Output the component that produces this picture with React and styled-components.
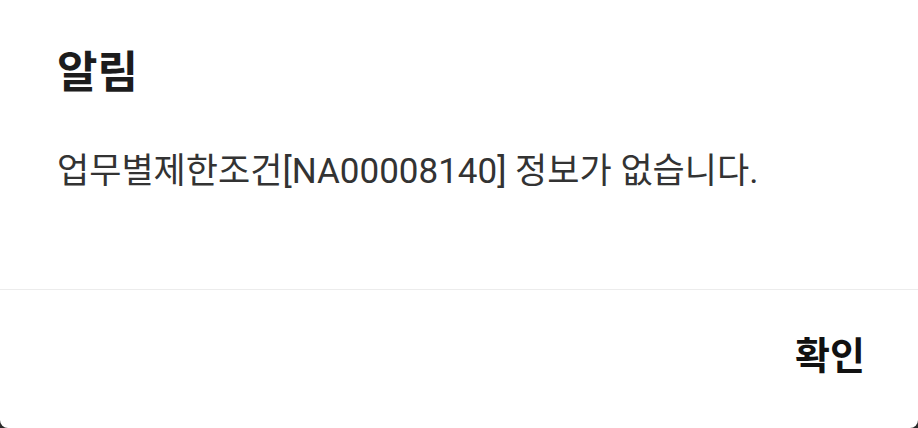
import styled, { createGlobalStyle } from "styled-components";

const GlobalStyle = createGlobalStyle`
    html, body {
        margin: 0;
        padding: 0;
        background: #2b2b2b;
        font-family: Roboto, "Noto Sans CJK KR", sans-serif;
    }
`

export default function App() {
    return (
        <>
            <GlobalStyle />
            <Dialog>
                <Content>
                    <Title>알림</Title>
                    <Message>업무별제한조건[NA00008140] 정보가 없습니다.</Message>
                </Content>
                <Divider />
                <Footer>
                    <ConfirmButton>확인</ConfirmButton>
                </Footer>
            </Dialog>
        </>
    )
}

const Dialog = styled.div`
    width: 918px;
    height: 428px;
    background-color: #fff;
    border-radius: 0 0 8px 8px;
    display: flex;
    flex-direction: column;
    overflow: hidden;
`

const Content = styled.div`
    height: 289px;
    box-sizing: border-box;
    padding: 51px 57px 0;
`

const Title = styled.h2`
    margin: 0;
    font-size: 44px;
    line-height: 1;
    font-weight: 700;
    color: #1c1c1c;
`

const Message = styled.p`
    margin: 59px 0 0;
    font-size: 35px;
    line-height: 1;
    font-weight: 400;
    color: #333;
`

const Divider = styled.div`
    border-bottom: 1px solid #ececec;
`

const Footer = styled.div`
    flex: 1;
    display: flex;
    justify-content: flex-end;
    align-items: flex-start;
    padding: 47px 53px 0 0;
`

const ConfirmButton = styled.button`
    background: none;
    border: none;
    padding: 0;
    font-family: inherit;
    font-size: 38px;
    line-height: 1;
    font-weight: 700;
    color: #111;
    cursor: pointer;
`
